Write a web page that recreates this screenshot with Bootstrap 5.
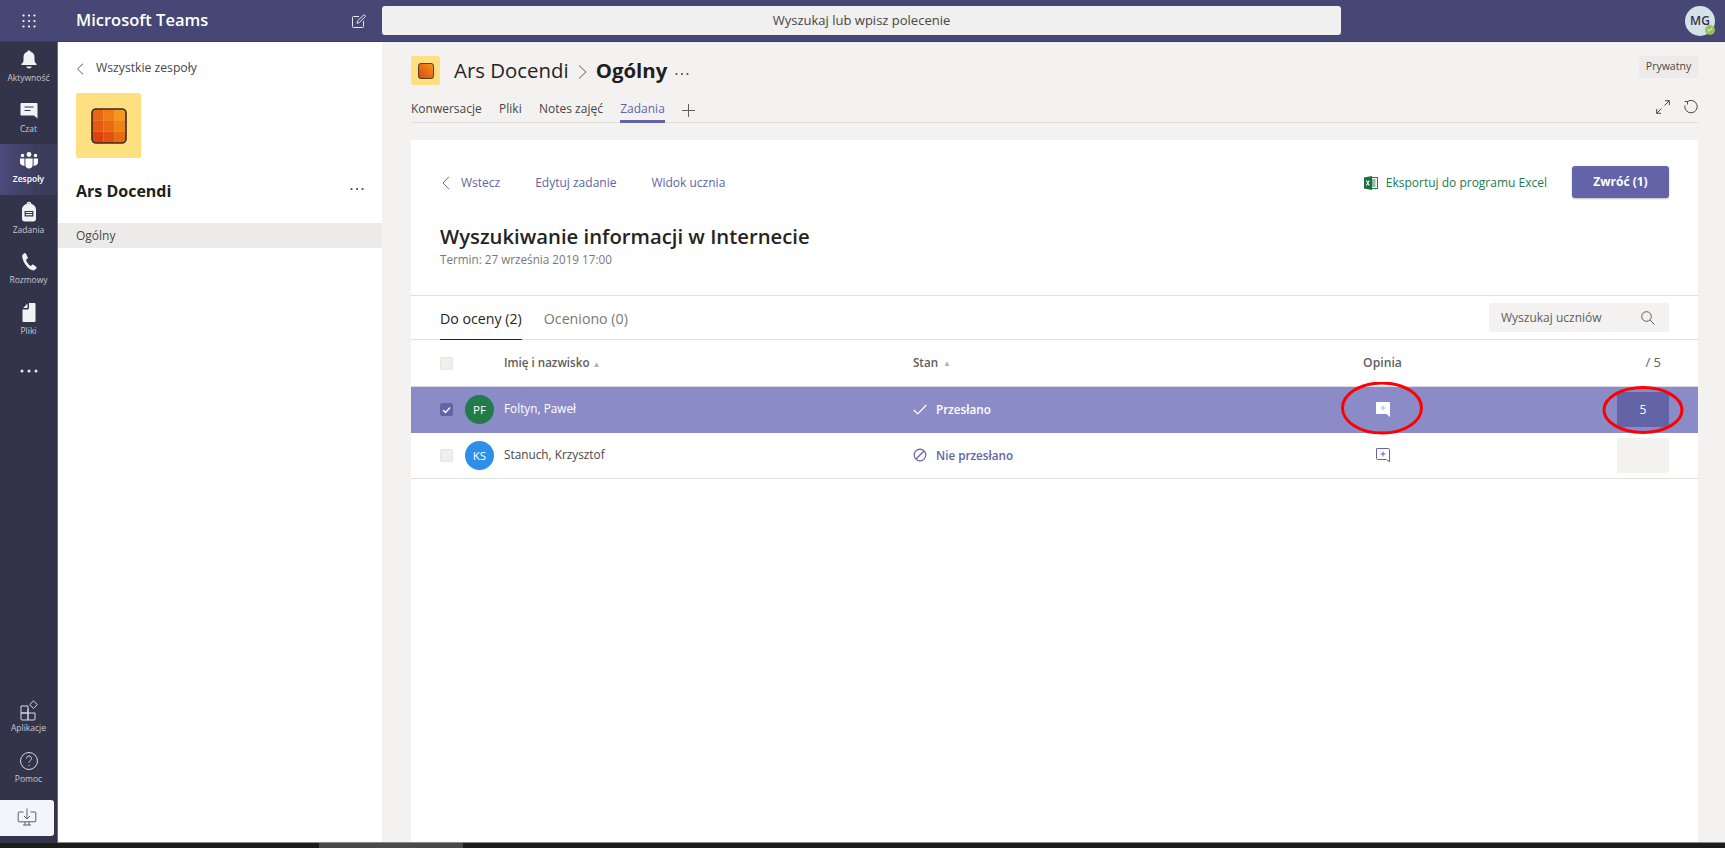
<!DOCTYPE html>
<html lang="pl">

<head>
  <meta charset="UTF-8">
  <meta name="viewport" content="width=device-width, initial-scale=1.0">
  <title>Microsoft Teams</title>
  <link href="https://cdn.jsdelivr.net/npm/bootstrap@5.3.3/dist/css/bootstrap.min.css" rel="stylesheet">
  <style>
    html, body { height: 100%; overflow: hidden; }
    body { font-family: "Open Sans", "Noto Sans", sans-serif; font-size: 12px; color: #252423; background: #1c1c1c; }
    .app-shell { height: 848px; }

    /* top bar */
    .top-bar { height: 42px; background: #464775; border-bottom: 1px solid #3d3e66; }
    .top-grid { width: 58px; }
    .top-title { width: 324px; padding-left: 18px; color: #fff; font-size: 16.5px; font-weight: 600; }
    .top-compose { margin-left: auto; margin-right: 16px; }
    .top-search { width: 959px; height: 29px; background: #f0f0f0; border-radius: 3px; font-size: 13px; color: #484644; }
    .me-avatar { width: 30px; height: 30px; margin-right: 10px; background: #d5e3e9; color: #33344a; font-size: 12px; font-weight: 600; }
    .me-status { right: 0; bottom: 1px; width: 10px; height: 10px; background: #92c353; }

    .work-area { height: 801px; }

    /* left rail */
    .side-rail { width: 58px; background: #33344a; padding-top: 1px; border-right: 1px solid #6b6b78; }
    .rail-item { height: 50.5px; color: #c8c8d2; font-size: 8.5px; line-height: 11px; padding-top: 6px; }
    .rail-item svg { display: block; margin-bottom: 1px; }
    .rail-item.is-active { background: linear-gradient(90deg, #4a4b7c 0, #3d3e5f 60%, #3a3b58 100%); color: #fff; font-weight: 600; }
    .rail-more { height: 50px; }
    .rail-get { width: 54px; height: 36px; background: #f4f4fc; border-radius: 0 3px 3px 0; margin-top: 6px; margin-bottom: 7px; }

    /* team panel */
    .team-panel { width: 324px; background: #fff; border-bottom: 1px solid #8a8a8a; }
    .team-back { padding: 17px 0 0 18px; height: 51px; font-size: 12.2px; color: #484644; gap: 12px; }
    .team-logo { width: 65px; height: 65px; margin-left: 18px; background: #ffe081; border-radius: 2px; }
    .team-name { padding: 21px 18px 0; height: 65px; font-size: 16px; font-weight: 700; color: #201f1e; }
    .channel-row { height: 25px; padding-left: 18px; background: #edebe9; font-size: 12px; color: #484644; }

    /* main */
    .main-pane { background: #f3f2f1; padding: 0 27px 0 29px; min-width: 0; border-bottom: 1px solid #8a8a8a; }
    .crumb-row { height: 58px; padding-top: 14px; }
    .crumb-logo { width: 29px; height: 29px; background: #ffe081; border-radius: 2px; margin-right: 14px; }
    .crumb-team { margin-top: -1px; font-size: 20.4px; color: #252423; }
    .crumb-sep { margin: 0 9px 0 9px; }
    .crumb-chan { margin-top: -1px; font-size: 20.4px; font-weight: 700; color: #201f1e; }
    .crumb-dots { margin-left: 8px; }
    .private-chip { margin-left: auto; width: 59px; height: 22px; background: #edebe9; border-radius: 2px; font-size: 10.5px; color: #484644; }
    .tab-row { height: 23px; border-bottom: 1px solid #e1dfdd; gap: 17.3px; font-size: 12px; color: #484644; }
    .tab-link { height: 23px; line-height: 17px; }
    .tab-link.is-on { color: #6264a7; border-bottom: 3px solid #6264a7; }
    .tab-tools { margin-left: auto; gap: 14px; margin-top: 0; }

    /* assignment card */
    .grade-card { margin-top: 17px; background: #fff; flex: 1 1 auto; }
    .card-head { padding: 26px 29px 0 29px; height: 156px; border-bottom: 1px solid #e1dfdd; }
    .head-links { height: 32px; color: #6264a7; font-size: 12px; }
    .head-links > span { margin-top: 2px; }
    .back-link { gap: 11px; margin-left: 2px; margin-right: 35px; }
    .edit-link { margin-right: 35px; }
    .excel-link { margin-left: auto; margin-right: 25px; color: #237b4b; gap: 8px; font-size: 12px; }
    .return-btn { width: 97px; height: 32px; padding: 0; background: #6264a7; border: 0; border-radius: 3px; color: #fff; font-size: 12px; font-weight: 700; box-shadow: 0 1px 2px rgba(0, 0, 0, .25); }
    .return-btn:hover { background: #6264a7; color: #fff; }
    .task-title { margin: 24px 0 0; font-size: 20.3px; font-weight: 600; line-height: 28px; color: #252423; }
    .task-due { margin-top: 1px; font-size: 11.7px; line-height: 16px; color: #7a7876; }

    .filter-row { height: 44px; padding: 0 29px; border-bottom: 1px solid #e1dfdd; }
    .filter-tab { height: 44px; margin-right: 22px; font-size: 14.2px; line-height: 45px; color: #7a7876; }
    .filter-tab.is-on { color: #252423; border-bottom: 1px solid #252423; }
    .pupil-search { margin-left: auto; width: 180px; height: 29px; padding: 0 14px 0 12px; background: #f3f2f1; border-radius: 3px; font-size: 12px; color: #605e5c; }

    .grade-row { height: 46px; padding-left: 29px; padding-right: 29px; border-bottom: 1px solid #e1dfdd; font-size: 11.8px; color: #484644; }
    .grade-row.is-head { height: 47px; border-bottom-color: #d8d8e6; color: #605e5c; font-size: 11.6px; }
    .grade-row.is-picked { background: #8b8cc7; color: #fff; border-bottom-color: #8b8cc7; }
    .col-check { width: 25px; }
    .col-avatar { width: 39px; }
    .col-name { width: 409px; margin-top: -1px; }
    .col-state { width: 434px; font-size: 11.7px; font-weight: 600; color: #6264a7; gap: 9px; }
    .is-head .col-state { color: #605e5c; gap: 5px; font-size: 11.6px; }
    .is-picked .col-state { color: #fff; }
    .col-note { width: 71px; justify-content: center; }
    .is-head .col-note { font-size: 12.2px; }
    .col-mark { margin-left: auto; width: 52px; height: 35px; background: #f3f2f1; border-radius: 2px; font-size: 12px; }
    .is-head .col-mark { background: none; justify-content: flex-end !important; padding-right: 8px; font-size: 13px; }
    .is-picked .col-mark { background: #6264a7; color: #fff; }
    .tick-box { width: 13px; height: 13px; background: #f0efee; border: 1px solid #e6e5e4; border-radius: 2px; }
    .tick-box.is-on { background: #6264a7; border-color: #6264a7; }
    .pupil-avatar { width: 29px; height: 29px; font-size: 11.5px; color: #fff; }
    .pupil-green { background: #237b4b; }
    .pupil-blue { background: #2f8fe8; }
    .sort-mark { color: #b3b0ad; font-size: 8px; }
    .red-ring { pointer-events: none; top: 50%; left: 50%; transform: translate(-50%, -50%); }

    .bottom-strip { height: 5px; background: #1c1c1c; padding-left: 319px; }
    .strip-thumb { width: 144px; background: #4a4a4a; }
  </style>
</head>

<body>
  <div class="app-shell d-flex flex-column">

    <!-- top bar -->
    <header class="top-bar d-flex align-items-center flex-shrink-0">
      <div class="top-grid d-flex justify-content-center">
        <svg width="14" height="14" viewBox="0 0 14 14" fill="#fff"><circle cx="1.5" cy="1.5" r="1.1"/><circle cx="7" cy="1.5" r="1.1"/><circle cx="12.5" cy="1.5" r="1.1"/><circle cx="1.5" cy="7" r="1.1"/><circle cx="7" cy="7" r="1.1"/><circle cx="12.5" cy="7" r="1.1"/><circle cx="1.5" cy="12.5" r="1.1"/><circle cx="7" cy="12.5" r="1.1"/><circle cx="12.5" cy="12.5" r="1.1"/></svg>
      </div>
      <div class="top-title d-flex align-items-center">
        Microsoft Teams
        <svg class="top-compose" width="14" height="14" viewBox="0 0 14 14" fill="none" stroke="#e6e6f0"><path d="M7 2.5H1.5a1 1 0 0 0-1 1v9a1 1 0 0 0 1 1h9a1 1 0 0 0 1-1V7"/><path d="M5 9.3l.6-2.4L12 .6l1.6 1.6-6.3 6.4z"/></svg>
      </div>
      <div class="top-search d-flex align-items-center justify-content-center">Wyszukaj lub wpisz polecenie</div>
      <div class="me-avatar rounded-circle position-relative d-flex align-items-center justify-content-center ms-auto">
        MG
        <span class="me-status position-absolute rounded-circle d-flex align-items-center justify-content-center">
          <svg width="6" height="5" viewBox="0 0 6 5" fill="none" stroke="#fff"><path d="M.6 2.500 2.300 4 5.400.8"/></svg>
        </span>
      </div>
    </header>

    <div class="work-area d-flex flex-shrink-0">

      <!-- left rail -->
      <nav class="side-rail d-flex flex-column flex-shrink-0">
        <div class="rail-item d-flex flex-column align-items-center">
          <svg width="20" height="22" viewBox="0 0 20 22" fill="#f2f2f6"><path d="M10 1.5c-.9 0-1.5.5-1.6 1.3C5.900 3.500 4.500 5.500 4.500 8.300v3.200c0 1.600-1 2.400-2 3.300-.5.500-.3 1.200.5 1.200h14c.8 0 1-.7.500-1.200-1-.9-2-1.700-2-3.300V8.300c0-2.800-1.400-4.800-3.900-5.500-.1-.8-.7-1.300-1.600-1.300z"/><path d="M7.200 17.500h5.600c-.4 1.200-1.500 2-2.800 2s-2.400-.8-2.800-2z"/></svg>
          Aktywność
        </div>
        <div class="rail-item d-flex flex-column align-items-center">
          <svg width="20" height="22" viewBox="0 0 20 22"><path fill="#f2f2f6" d="M2.500 3h15c.6 0 1 .4 1 1v14.500l-3.500-3H2.500c-.6 0-1-.4-1-1V4c0-.6.4-1 1-1z"/><path stroke="#33344a" stroke-width="1.200" d="M5.500 7h9M5.500 10.500h6"/></svg>
          Czat
        </div>
        <div class="rail-item is-active d-flex flex-column align-items-center">
          <svg width="20" height="22" viewBox="0 0 20 22" fill="#fff"><circle cx="10" cy="4.500" r="2.400"/><circle cx="3.500" cy="5.500" r="1.700"/><circle cx="16.500" cy="5.500" r="1.700"/><path d="M6.400 8.500h7.200v6.500c0 2-1.600 3.600-3.600 3.600S6.400 17 6.400 15z"/><path d="M1 8.500h4.400V14c0 .6.100 1.200.3 1.700C3 15.900 1 14.500 1 12.500zM19 8.500h-4.400V14c0 .6-.1 1.200-.3 1.700 2.700.2 4.700-1.200 4.700-3.200z"/></svg>
          Zespoły
        </div>
        <div class="rail-item d-flex flex-column align-items-center">
          <svg width="20" height="22" viewBox="0 0 20 22"><path fill="#f2f2f6" d="M10 .8c-1.300 0-2.200.9-2.400 2.100C5 3.500 3 5.600 3 8.500V18c0 1.400 1.100 2.500 2.500 2.500h9c1.400 0 2.500-1.100 2.500-2.500V8.500c0-2.900-2-5-4.600-5.600C12.200 1.700 11.300.8 10 .8zm0 1.400c.4 0 .8.200 1 .5H9c.2-.3.600-.5 1-.5z"/><path fill="none" stroke="#33344a" stroke-width="1.200" d="M6.200 10.500h7.600v4.400H6.200zM6.200 12.500h7.600"/></svg>
          Zadania
        </div>
        <div class="rail-item d-flex flex-column align-items-center">
          <svg width="20" height="22" viewBox="0 0 20 22" fill="#f2f2f6"><path d="M5.500 2.200 4 3.200c-.9.600-1 1.900-.6 3.500.6 2.600 2 5.400 3.700 7.700 1.700 2.200 3.700 4 5.900 4.700 1.300.4 2.300.3 3-.4l1.400-1.400c.4-.4.400-1 0-1.300l-3-2.300c-.4-.3-.9-.3-1.200 0l-1.100 1c-.3.300-.6.300-.9.100-1.200-.9-3.400-3.700-4-5.400-.1-.4-.1-.7.200-.9l1.100-.9c.4-.3.500-.8.300-1.200L6.900 2.600c-.3-.5-.9-.7-1.400-.4z"/></svg>
          Rozmowy
        </div>
        <div class="rail-item d-flex flex-column align-items-center">
          <svg width="20" height="22" viewBox="0 0 20 22" fill="#f2f2f6"><path d="M10 1h5.500c.6 0 1 .4 1 1v17c0 .6-.4 1-1 1h-11c-.6 0-1-.4-1-1V7.500h5c.8 0 1.500-.7 1.500-1.500z"/><path d="M8.500 1.600V5.500c0 .3-.2.500-.5.500H4.200z"/></svg>
          Pliki
        </div>
        <div class="rail-more d-flex align-items-center justify-content-center">
          <svg width="18" height="4" viewBox="0 0 18 4" fill="#e6e6ee"><circle cx="2" cy="2" r="1.500"/><circle cx="9" cy="2" r="1.500"/><circle cx="16" cy="2" r="1.500"/></svg>
        </div>
        <div class="mt-auto rail-item d-flex flex-column align-items-center">
          <svg width="20" height="22" viewBox="0 0 20 22" fill="none" stroke="#d8d8e2"><path d="M2 7h7v7H2zM2 14h7v7H3a1 1 0 0 1-1-1zM9 9.500V21h6a1 1 0 0 0 1-1v-6H9"/><path d="M14.500 1.800l3.800 3.800-3.800 3.800-3.800-3.800z"/></svg>
          Aplikacje
        </div>
        <div class="rail-item d-flex flex-column align-items-center">
          <svg width="20" height="22" viewBox="0 0 20 22" fill="none" stroke="#d8d8e2"><circle cx="10" cy="11" r="8.500"/><path d="M7.500 8.500c0-1.500 1.100-2.500 2.500-2.500s2.500 1 2.500 2.400c0 2.200-2.500 2-2.500 4.300"/><path d="M10 15v1"/></svg>
          Pomoc
        </div>
        <div class="rail-get d-flex align-items-center justify-content-center">
          <svg width="20" height="20" viewBox="0 0 20 20" fill="none" stroke="#605e5c"><path d="M6.500 4H2a.8.800 0 0 0-.8.800V13a.8.800 0 0 0 .8.800h16a.8.800 0 0 0 .8-.8V4.800A.8.800 0 0 0 18 4h-4.500"/><path d="M10 .5v10M7 8l3 3 3-3M8 13.800v3.200M12 13.800v3.200M6 17h8"/></svg>
        </div>
      </nav>

      <!-- team panel -->
      <aside class="team-panel d-flex flex-column flex-shrink-0">
        <div class="team-back d-flex align-items-start">
          <svg class="mt-1" width="8" height="12" viewBox="0 0 8 12" fill="none" stroke="#605e5c"><path d="M7 .7 1.500 6 7 11.300"/></svg>
          Wszystkie zespoły
        </div>
        <div class="team-logo d-flex align-items-center justify-content-center">
          <svg width="36" height="36" viewBox="0 0 36 36">
            <defs><clipPath id="tileClip"><rect x="1" y="1" width="34" height="34" rx="4"/></clipPath></defs>
            <g clip-path="url(#tileClip)">
              <rect x="1" y="1" width="11.400" height="11.400" fill="#e9650f"/><rect x="12.300" y="1" width="11.400" height="11.400" fill="#ef7d12"/><rect x="23.600" y="1" width="11.400" height="11.400" fill="#f39a1c"/>
              <rect x="1" y="12.300" width="11.400" height="11.400" fill="#e55a10"/><rect x="12.300" y="12.300" width="11.400" height="11.400" fill="#ea6a11"/><rect x="23.600" y="12.300" width="11.400" height="11.400" fill="#ee8216"/>
              <rect x="1" y="23.600" width="11.400" height="11.400" fill="#dc4210"/><rect x="12.300" y="23.600" width="11.400" height="11.400" fill="#e3520f"/><rect x="23.600" y="23.600" width="11.400" height="11.400" fill="#e66a10"/>
            </g>
            <rect x="1" y="1" width="34" height="34" rx="4" fill="none" stroke="#3d2a20" stroke-width="1.600"/>
          </svg>
        </div>
        <div class="team-name d-flex justify-content-between align-items-start">
          Ars Docendi
          <svg class="mt-2" width="14" height="4" viewBox="0 0 14 4" fill="#484644"><circle cx="1.500" cy="2" r="1.100"/><circle cx="7" cy="2" r="1.100"/><circle cx="12.500" cy="2" r="1.100"/></svg>
        </div>
        <div class="channel-row d-flex align-items-center">Ogólny</div>
      </aside>

      <!-- main -->
      <main class="main-pane flex-grow-1 d-flex flex-column">
        <div class="crumb-row d-flex align-items-start">
          <div class="crumb-logo d-flex align-items-center justify-content-center">
            <svg width="16" height="16" viewBox="0 0 36 36">
              <defs><linearGradient id="tileSmall" x1="1" y1="0" x2="0" y2="1"><stop offset="0" stop-color="#f39a1c"/><stop offset="1" stop-color="#dc4210"/></linearGradient></defs>
              <rect x="1" y="1" width="34" height="34" rx="6" fill="url(#tileSmall)" stroke="#3d2a20" stroke-width="2"/>
            </svg>
          </div>
          <span class="crumb-team">Ars Docendi</span>
          <svg class="crumb-sep mt-2" width="9" height="16" viewBox="0 0 9 16" fill="none" stroke="#605e5c"><path d="M1 1.500 8 8l-7 6.500"/></svg>
          <span class="crumb-chan">Ogólny</span>
          <svg class="crumb-dots mt-3" width="14" height="4" viewBox="0 0 14 4" fill="#484644"><circle cx="1.500" cy="2" r="1"/><circle cx="7" cy="2" r="1"/><circle cx="12.500" cy="2" r="1"/></svg>
          <div class="private-chip d-flex align-items-center justify-content-center">Prywatny</div>
        </div>
        <div class="tab-row d-flex align-items-start">
          <span class="tab-link">Konwersacje</span>
          <span class="tab-link">Pliki</span>
          <span class="tab-link">Notes zajęć</span>
          <span class="tab-link is-on">Zadania</span>
          <svg class="mt-1" width="13" height="13" viewBox="0 0 13 13" stroke="#605e5c"><path d="M6.500 0v13M0 6.500h13"/></svg>
          <div class="tab-tools d-flex align-items-center">
            <svg width="14" height="14" viewBox="0 0 14 14" fill="none" stroke="#484644"><path d="M8.500 5.500 13.300.7M9 .7h4.300V5M5.500 8.500.7 13.300M.7 9v4.300H5"/></svg>
            <svg width="14" height="14" viewBox="0 0 14 14" fill="none" stroke="#484644"><path d="M3.500 1.500A6.200 6.200 0 1 1 .9 5.500M3.500 1.500V4.500M3.500 1.500H.6"/></svg>
          </div>
        </div>

        <section class="grade-card d-flex flex-column">
          <div class="card-head">
            <div class="head-links d-flex align-items-center">
              <span class="back-link d-flex align-items-center">
                <svg width="8" height="14" viewBox="0 0 8 14" fill="none" stroke="#6264a7"><path d="M7 .7 1 7l6 6.300"/></svg>
                Wstecz
              </span>
              <span class="edit-link">Edytuj zadanie</span>
              <span>Widok ucznia</span>
              <span class="excel-link d-flex align-items-center">
                <svg width="14" height="14" viewBox="0 0 14 14"><rect x="5" y="1.500" width="8.500" height="11" fill="#fff" stroke="#237b4b"/><path d="M7.500 4h4M7.500 6h4M7.500 8h4M7.500 10h4" stroke="#237b4b"/><path fill="#1d6f42" d="M0 1.500 8 0v14L0 12.500z"/><path d="M2.300 4.500l3 5M5.300 4.500l-3 5" stroke="#fff" stroke-width="1.100"/></svg>
                Eksportuj do programu Excel
              </span>
              <button type="button" class="btn return-btn">Zwróć (1)</button>
            </div>
            <h1 class="task-title">Wyszukiwanie informacji w Internecie</h1>
            <div class="task-due">Termin: 27 września 2019 17:00</div>
          </div>

          <div class="filter-row d-flex align-items-center">
            <span class="filter-tab is-on">Do oceny (2)</span>
            <span class="filter-tab">Oceniono (0)</span>
            <div class="pupil-search d-flex align-items-center justify-content-between">
              Wyszukaj uczniów
              <svg width="14" height="14" viewBox="0 0 14 14" fill="none" stroke="#605e5c"><circle cx="5.500" cy="5.500" r="4.800"/><path d="M9 9l4.500 4.500"/></svg>
            </div>
          </div>

          <div class="grade-row is-head d-flex align-items-center">
            <div class="col-check"><span class="tick-box d-block"></span></div>
            <div class="col-avatar"></div>
            <div class="col-name fw-semibold">Imię i nazwisko <span class="sort-mark">▲</span></div>
            <div class="col-state d-flex align-items-center">Stan <span class="sort-mark">▲</span></div>
            <div class="col-note d-flex fw-semibold">Opinia</div>
            <div class="col-mark d-flex align-items-center justify-content-center">/ 5</div>
          </div>

          <div class="grade-row is-picked d-flex align-items-center">
            <div class="col-check">
              <span class="tick-box is-on d-flex align-items-center justify-content-center">
                <svg width="9" height="8" viewBox="0 0 9 8" fill="none" stroke="#fff" stroke-width="1.300"><path d="M1 4l2.500 2.500L8 1.500"/></svg>
              </span>
            </div>
            <div class="col-avatar"><span class="pupil-avatar pupil-green rounded-circle d-flex align-items-center justify-content-center">PF</span></div>
            <div class="col-name">Foltyn, Paweł</div>
            <div class="col-state d-flex align-items-center">
              <svg width="14" height="11" viewBox="0 0 14 11" fill="none" stroke="#fff" stroke-width="1.200"><path d="M.7 6l4 4L13.300 1"/></svg>
              Przesłano
            </div>
            <div class="col-note d-flex position-relative">
              <svg width="14" height="15" viewBox="0 0 14 15"><path fill="#fff" d="M1 0h12c.6 0 1 .4 1 1v14l-3.500-3H1c-.6 0-1-.4-1-1V1c0-.6.4-1 1-1z"/><path stroke="#b9b9e0" d="M4.500 6h5M7 3.500v5"/></svg>
              <svg class="red-ring position-absolute" width="84" height="56" viewBox="0 0 84 56" fill="none" stroke="#f00" stroke-width="3"><ellipse cx="41" cy="26" rx="39.500" ry="25"/></svg>
            </div>
            <div class="col-mark d-flex align-items-center justify-content-center position-relative">
              5
              <svg class="red-ring position-absolute" width="82" height="48" viewBox="0 0 82 48" fill="none" stroke="#f00" stroke-width="3"><ellipse cx="41" cy="24" rx="39" ry="22.500"/></svg>
            </div>
          </div>

          <div class="grade-row d-flex align-items-center">
            <div class="col-check"><span class="tick-box d-block"></span></div>
            <div class="col-avatar"><span class="pupil-avatar pupil-blue rounded-circle d-flex align-items-center justify-content-center">KS</span></div>
            <div class="col-name">Stanuch, Krzysztof</div>
            <div class="col-state d-flex align-items-center">
              <svg width="14" height="14" viewBox="0 0 14 14" fill="none" stroke="#6264a7" stroke-width="1.200"><circle cx="7" cy="7" r="5.800"/><path d="M3 11 11 3"/></svg>
              Nie przesłano
            </div>
            <div class="col-note d-flex">
              <svg width="14" height="15" viewBox="0 0 14 15" fill="none" stroke="#6264a7"><path d="M1.500.5h11c.6 0 1 .4 1 1v12.400l-3-2.400h-9c-.6 0-1-.4-1-1v-9.500c0-.6.400-1 1-1z"/><path d="M4.500 6h5M7 3.500v5"/></svg>
            </div>
            <div class="col-mark d-flex align-items-center justify-content-center"></div>
          </div>
        </section>
      </main>
    </div>

    <div class="bottom-strip d-flex flex-shrink-0"><span class="strip-thumb"></span></div>
  </div>

  <script src="https://cdn.jsdelivr.net/npm/bootstrap@5.3.3/dist/js/bootstrap.bundle.min.js"></script>
</body>

</html>
